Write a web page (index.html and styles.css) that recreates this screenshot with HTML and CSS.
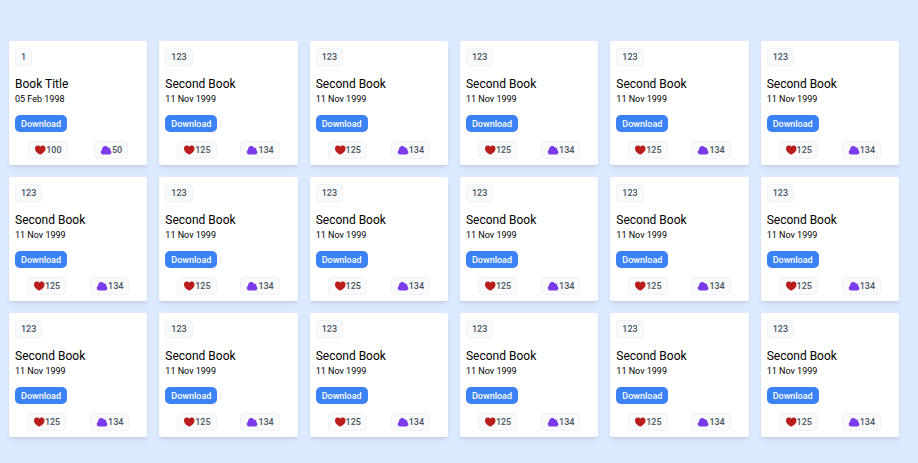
FILE: index.html
```html
<!DOCTYPE html>
<html lang="en">
<head>
<meta charset="utf-8">
<meta name="viewport" content="width=device-width, initial-scale=1">
<title>Books</title>
<link rel="stylesheet" href="styles.css">
</head>
<body>
<main class="books" id="books"></main>
<template id="book-card">
  <article class="card">
    <span class="badge number"></span>
    <h2 class="title"></h2>
    <p class="date"></p>
    <button class="download" type="button">Download</button>
    <div class="stats">
      <button class="badge stat" type="button" aria-label="Likes">
        <svg class="icon heart" viewBox="0 0 24 20" aria-hidden="true"><path d="M12.500 19.500C9 17.800 2 13.500 2 7C2 3.300 4.300 1 7.300 1C9.500 1 11.500 2 12.500 3.500C13.500 2 15.500 1 17.700 1C20.700 1 23 3.300 23 7C23 13.500 16 17.800 12.500 19.500Z"/></svg><span class="likes"></span>
      </button>
      <button class="badge stat" type="button" aria-label="Downloads">
        <svg class="icon cloud" viewBox="0 0 24 20" aria-hidden="true"><path d="M6 19C3.300 19 1.500 17 1.500 14.200C1.500 12 2.500 10.300 4.200 9.500C3.500 5.500 6.500 2 10.500 2C13 2 15 3.200 16.200 5.300C19 4.800 21 7.200 20.500 10C22 11 22.800 12.700 22.800 14.500C22.800 17 21 19 18.500 19Z"/></svg><span class="downloads"></span>
      </button>
    </div>
  </article>
</template>
<script src="books.js"></script>
</body>
</html>
```
FILE: styles.css
```css
* {
  box-sizing: border-box;
}

body {
  margin: 0;
  min-height: 100vh;
  background: #dbeafe;
  color: #000;
  font-family: Roboto, "Liberation Sans", sans-serif;
  font-size: 9px;
  line-height: 12px;
}

.books {
  display: grid;
  grid-template-columns: repeat(6, minmax(0, 1fr));
  gap: 12px;
  padding: 41px 19px 26px 9px;
}

.card {
  display: flex;
  flex-direction: column;
  align-items: flex-start;
  padding: 7px 6px 6px;
  border-radius: 2px;
  background: #fff;
  box-shadow: 0 3px 5px -1px rgb(0 0 0 / 0.1), 0 2px 3px -2px rgb(0 0 0 / 0.1);
}

.badge {
  display: flex;
  align-items: center;
  padding: 2px 5px;
  border: 1px solid #f0f2f5;
  border-radius: 4px;
  background: #f9fafb;
  color: #4b5563;
  font: 500 9px/12px Roboto, "Liberation Sans", sans-serif;
}

.number {
  height: 18px;
}

.title {
  margin: 9px 0 0;
  font-size: 12px;
  font-weight: 400;
  line-height: 18px;
}

.date {
  margin: 0;
}

.download {
  margin: 10px 0 9px;
  padding: 3px 6px 2px;
  border: 0;
  border-radius: 5px;
  background: #3b82f6;
  color: #fff;
  font: 500 9px/12px Roboto, "Liberation Sans", sans-serif;
}

.stats {
  display: flex;
  justify-content: space-around;
  align-self: stretch;
}

.stat {
  height: 18px;
}

.icon {
  width: 12px;
  height: 10px;
}

.heart {
  fill: #b91c1c;
}

.cloud {
  fill: #7c3aed;
}
```
FILE: books.js
```js
const secondBook = { number: 123, title: "Second Book", date: "11 Nov 1999", likes: 125, downloads: 134 };
const books = [
  { number: 1, title: "Book Title", date: "05 Feb 1998", likes: 100, downloads: 50 },
  ...Array(17).fill(secondBook)
];

const list = document.getElementById("books");
const template = document.getElementById("book-card");

for (const book of books) {
  const card = template.content.cloneNode(true);
  for (const [field, value] of Object.entries(book)) {
    card.querySelector("." + field).textContent = value;
  }
  list.append(card);
}
```
